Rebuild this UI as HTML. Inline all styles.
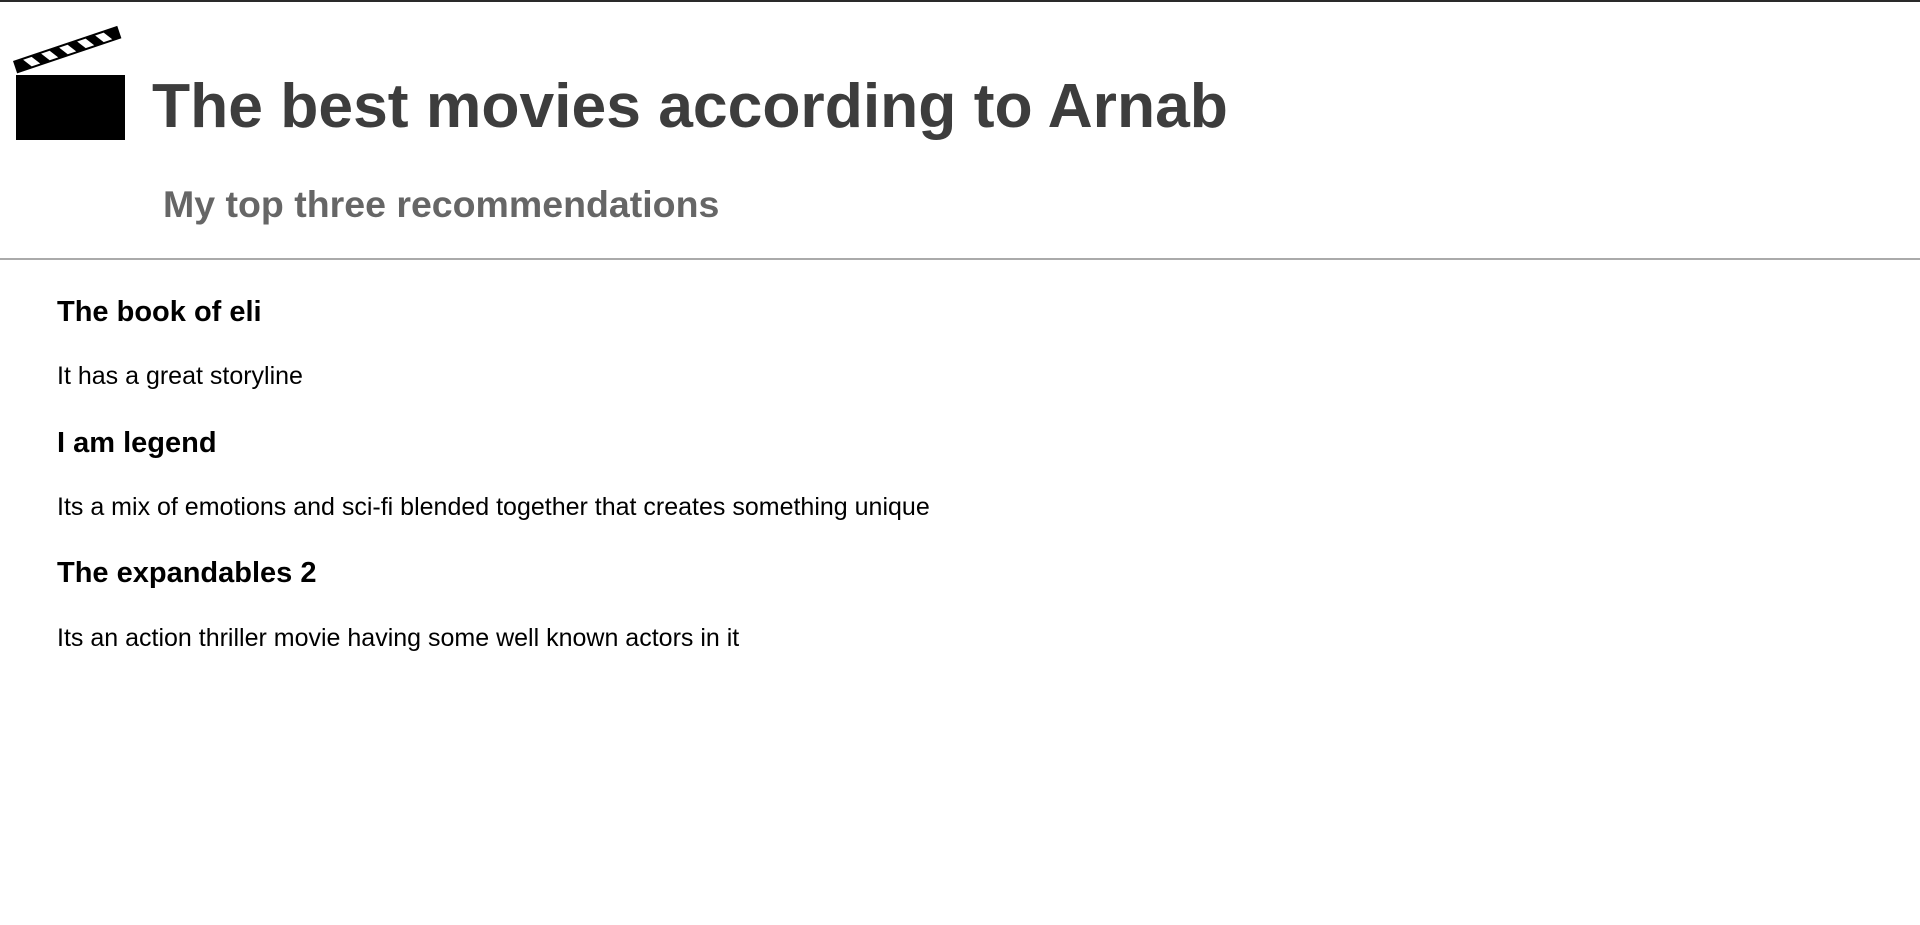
<!DOCTYPE html>
<html><head><meta charset="utf-8"><style>
html,body{margin:0;padding:0;background:#fff;width:1920px;height:925px;overflow:hidden;position:relative}
.t{position:absolute;white-space:nowrap;line-height:1;margin:0}
#top{position:absolute;left:0;top:0;width:1920px;height:2px;background:#2a2a2a}
#rule{position:absolute;left:0;top:258px;width:1920px;height:2px;background:#aaa}
h1.t{font:bold 62.4px "Liberation Sans",sans-serif;color:#3d3d3d;left:152px;top:71px}
h2.t{font:bold 37.5px "Liberation Sans",sans-serif;color:#666;left:163px;top:183px}
h3.t{font:bold 29px "Liberation Sans",sans-serif;color:#000;left:57px}
p.t{font:25px "Liberation Sans",sans-serif;color:#000;left:57px}
</style></head><body>
<div id="top"></div>
<svg style="position:absolute;left:0;top:0" width="140" height="150">
<rect x="16" y="75" width="109" height="65" fill="#000"/>
<g transform="translate(13,61) rotate(-18.6)">
<rect x="0" y="0" width="110" height="13" fill="#000"/>
<polygon points="10,2 19,2 25,11 16,11" fill="#fff"/>
<polygon points="29,2 38,2 44,11 35,11" fill="#fff"/>
<polygon points="48,2 57,2 63,11 54,11" fill="#fff"/>
<polygon points="67,2 76,2 82,11 73,11" fill="#fff"/>
<polygon points="86,2 95,2 101,11 92,11" fill="#fff"/>
</g>
</svg>
<h1 class="t">The best movies according to Arnab</h1>
<h2 class="t">My top three recommendations</h2>
<div id="rule"></div>
<h3 class="t" style="top:296px">The book of eli</h3>
<p class="t" style="top:362px">It has a great storyline</p>
<h3 class="t" style="top:427px">I am legend</h3>
<p class="t" style="top:493px">Its a mix of emotions and sci-fi blended together that creates something unique</p>
<h3 class="t" style="top:557px">The expandables 2</h3>
<p class="t" style="top:624px">Its an action thriller movie having some well known actors in it</p>
</body></html>
